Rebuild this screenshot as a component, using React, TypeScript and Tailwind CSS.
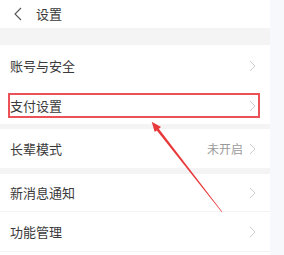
const font = { fontFamily: '"Noto Sans CJK SC", "Noto Sans", sans-serif' };

const Chevron = () => (
  <svg width="7" height="12" viewBox="0 0 7 12" className="shrink-0">
    <path d="M1 1 L6 6 L1 11" fill="none" stroke="#cdcdcd" strokeWidth="1" />
  </svg>
);

const Row = ({
  label,
  value,
  className = "",
}: {
  label: string;
  value?: string;
  className?: string;
}) => (
  <div className={`flex items-center justify-between pl-[10px] pr-[14px] bg-white ${className}`}>
    <span className="text-[13px] text-[#3a3a3a]">{label}</span>
    <div className="flex items-center gap-[6px]">
      {value && <span className="text-[12px] text-[#9a9a9a]">{value}</span>}
      <Chevron />
    </div>
  </div>
);

export default function App() {
  return (
    <div className="relative flex w-[284px] h-[255px] bg-white overflow-hidden" style={font}>
      <div className="flex flex-col w-[270px]">
        <div className="h-[28px] flex items-center pl-[14px] gap-[14px]">
          <svg width="8" height="14" viewBox="0 0 8 14">
            <path d="M7 1 L1 7 L7 13" fill="none" stroke="#555" strokeWidth="1.1" />
          </svg>
          <span className="text-[13px] text-[#3a3a3a]">设置</span>
        </div>
        <div className="h-[17px] bg-[#f4f4f4]" />
        <Row label="账号与安全" className="h-[42px]" />
        <Row label="支付设置" className="h-[37px]" />
        <div className="h-[5px] bg-[#f4f4f4]" />
        <Row label="长辈模式" value="未开启" className="h-[39px]" />
        <div className="h-[6px] bg-[#f4f4f4]" />
        <Row label="新消息通知" className="h-[38px] border-b border-[#f3f3f3]" />
        <Row label="功能管理" className="h-[40px] border-b border-[#f3f3f3]" />
      </div>
      <div className="flex-1 bg-[#f7f8fc]" />

      <div className="absolute left-[8px] top-[93px] w-[252px] h-[25px] border-2 border-[#ea5257]" />
      <svg className="absolute left-0 top-0" width="284" height="255" viewBox="0 0 284 255">
        <polygon
          points="151.7,121.7 161,127.1 158.8,128.8 222.2,211.8 221.8,212.2 156.8,130.4 154.7,132.1"
          fill="#e8393b"
        />
      </svg>
    </div>
  );
}
